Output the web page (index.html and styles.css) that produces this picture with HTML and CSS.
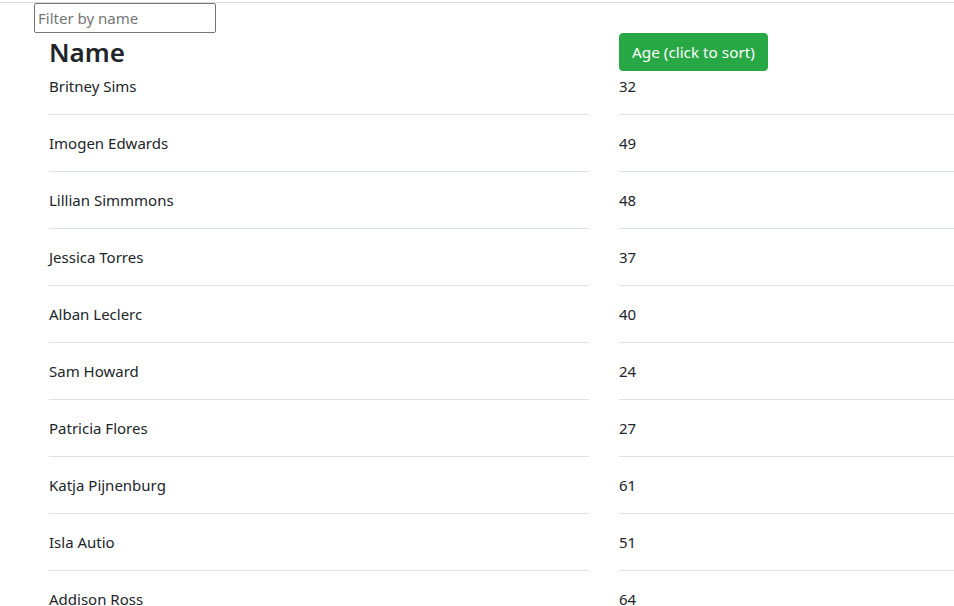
FILE: index.html
```html
<!DOCTYPE html>
<html>
<head>
<meta charset="utf-8">
<link rel="stylesheet" href="styles.css">
</head>
<body>
<div class="topbar"></div>
<div class="page">
  <input class="filter" type="text" placeholder="Filter by name">
  <div class="table">
    <div class="head">
      <div class="cell"><h3 class="title">Name</h3></div>
      <div class="cell"><button class="sort">Age (click to sort)</button></div>
    </div>
    <div class="row first"><div class="cell">Britney Sims</div><div class="cell">32</div></div>
    <div class="row"><div class="cell">Imogen Edwards</div><div class="cell">49</div></div>
    <div class="row"><div class="cell">Lillian Simmmons</div><div class="cell">48</div></div>
    <div class="row"><div class="cell">Jessica Torres</div><div class="cell">37</div></div>
    <div class="row"><div class="cell">Alban Leclerc</div><div class="cell">40</div></div>
    <div class="row"><div class="cell">Sam Howard</div><div class="cell">24</div></div>
    <div class="row"><div class="cell">Patricia Flores</div><div class="cell">27</div></div>
    <div class="row"><div class="cell">Katja Pijnenburg</div><div class="cell">61</div></div>
    <div class="row"><div class="cell">Isla Autio</div><div class="cell">51</div></div>
    <div class="row"><div class="cell">Addison Ross</div><div class="cell">64</div></div>
  </div>
</div>
</body>
</html>
```
FILE: styles.css
```css
html, body {
  margin: 0;
  padding: 0;
  overflow: hidden;
  background: #fff;
}
body {
  font-family: "Noto Sans", "Open Sans", sans-serif;
  font-size: 15px;
  line-height: 24px;
  color: #212529;
}
.topbar {
  height: 2px;
  border-bottom: 1px solid #dcdcdc;
}
.page {
  padding-left: 34px;
}
.filter {
  display: block;
  box-sizing: border-box;
  width: 182px;
  height: 30px;
  margin: 0;
  padding: 1px 3px;
  border: 1px solid #767676;
  border-radius: 2px;
  font-family: "Noto Sans", sans-serif;
  font-size: 15px;
  color: #212529;
}
.filter::placeholder {
  color: #757575;
}
.table {
  padding: 0 15px;
  width: 1200px;
}
.head, .row {
  display: grid;
  grid-template-columns: 540px 540px;
  column-gap: 30px;
}
.head {
  height: 38px;
  align-items: center;
  margin-bottom: 3px;
}
.title {
  margin: 0;
  font-size: 26px;
  font-weight: 600;
  line-height: 34px;
}
.sort {
  height: 38px;
  padding: 6px 12px;
  border: 1px solid #28a745;
  border-radius: 4px;
  background: #28a745;
  color: #fff;
  font-family: "Noto Sans", sans-serif;
  font-size: 15.3px;
  line-height: 24px;
  cursor: pointer;
}
.row .cell {
  border-top: 1px solid #dee2e6;
  padding: 16px 0;
}
.row.first .cell {
  border-top: 0;
  padding-top: 0;
}
```
